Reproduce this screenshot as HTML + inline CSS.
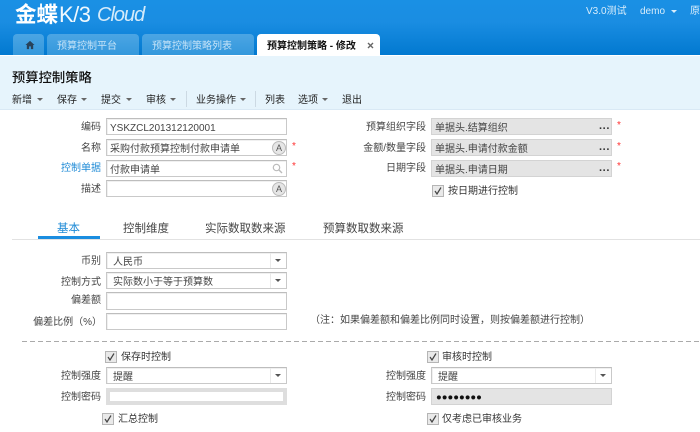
<!DOCTYPE html>
<html lang="zh">
<head>
<meta charset="utf-8">
<style>
html,body{margin:0;padding:0;background:#fff}
body{width:700px;height:432px;position:relative;overflow:hidden;font-family:"Liberation Sans","Noto Sans CJK SC",sans-serif;font-size:10px;color:#333}
.a{position:absolute;white-space:nowrap}
#hd{left:0;top:0;width:700px;height:55px;background:linear-gradient(#1a90e4 0,#1a8de2 40%,#0279d0 100%)}
#pn{left:0;top:56px;width:700px;height:53px;background:#e6f4fc;border-bottom:1px solid #d9e9f5}
.tab{top:34px;height:21px;border-radius:4px 4px 0 0;color:#c4e2f7;font-size:10px;line-height:26px;box-sizing:border-box;padding-left:10px;background:linear-gradient(#4ba5e4,#3498dc)}
.tb{top:94px;font-size:10px;line-height:14px;color:#222}
.ar{top:98px;width:0;height:0;border:3px solid transparent;border-top:3px solid #666;border-bottom:0}
.sep{top:91px;width:1px;height:16px;background:#ccd9e3}
.l{font-size:10px;line-height:14px;color:#444;text-align:right;margin-top:2px}
.i{box-sizing:border-box;background:#fff;border:1px solid #c9c9c9;border-top-color:#bdbdbd;box-shadow:inset 1px 1px 0 #f0f0f0;font-size:10px;line-height:16px;padding-left:3px;padding-top:2px;color:#444;overflow:hidden}
.g{background:#e4e4e4;border-color:#d3d3d3;box-shadow:none}
.st{color:#f33;font-size:10px;line-height:10px}
.dots{top:4px;right:1px;font-size:11px;line-height:12px;font-weight:bold;color:#333}
.lang{width:14px;height:14px;box-sizing:border-box;border-radius:50%;border:1px solid #bbb;background:#e6e6e6;font-size:9px;line-height:12px;text-align:center;color:#555}
.cb{box-sizing:border-box;width:12px;height:12px;border:1px solid #b5b5b5;background:#e9e9e9}
.cb svg{position:absolute;left:0;top:0}
.dd{width:0;height:0;border:3px solid transparent;border-top:3px solid #555;border-bottom:0}
.vs{width:1px;background:#eaeaea}
.tt{font-size:11.5px;line-height:14px;color:#444;top:222px}
.c{line-height:14px;color:#333;font-size:10px;margin-top:2px}
</style>
</head>
<body>
<div class="a" id="hd"></div>
<div class="a" style="left:15px;top:2px;font-size:21.5px;line-height:26px;color:#fff;font-weight:bold">金蝶</div>
<div class="a" style="left:59px;top:1px;font-size:22px;line-height:28px;color:#f0f8fd;letter-spacing:-.5px">K/3</div>
<div class="a" style="left:97px;top:1px;font-size:20px;line-height:28px;font-style:italic;color:#d5ebfa;letter-spacing:-1px">Cloud</div>
<div class="a" style="left:586px;top:5px;font-size:10px;line-height:14px;color:#d8edfb">V3.0测试</div>
<div class="a" style="left:640px;top:5px;font-size:10px;line-height:14px;color:#d8edfb">demo</div>
<div class="a" style="left:671px;top:10px;width:0;height:0;border:3px solid transparent;border-top:3px solid #d8edfb;border-bottom:0"></div>
<div class="a" style="left:690px;top:5px;font-size:10px;line-height:14px;color:#d8edfb">原</div>

<div class="a tab" style="left:13px;width:31px"></div>
<svg class="a" style="left:25px;top:40px" width="10" height="10" viewBox="0 0 11 10"><path d="M5.5 0.5 0.5 5H2v4.5h2.5V6.5h2v3H9V5h1.5z" fill="#28425a"/></svg>
<div class="a tab" style="left:47px;width:92px">预算控制平台</div>
<div class="a tab" style="left:142px;width:112px">预算控制策略列表</div>
<div class="a" style="left:257px;top:34px;width:123px;height:22px;background:#fff;border-radius:4px 4px 0 0"></div>
<div class="a" style="left:267px;top:40px;font-size:10px;line-height:14px;color:#111;font-weight:bold">预算控制策略 - 修改</div>
<svg class="a" style="left:367px;top:42px" width="7" height="7" viewBox="0 0 7 7"><path d="M1 1l5 5M6 1L1 6" stroke="#666" stroke-width="1.4"/></svg>

<div class="a" style="left:0;top:55px;width:700px;height:1px;background:#fff"></div>
<div class="a" id="pn"></div>
<div class="a" style="left:12px;top:69px;font-size:13.3px;line-height:18px;color:#111;font-weight:500">预算控制策略</div>

<div class="a tb" style="left:12px">新增</div><div class="a ar" style="left:37px"></div>
<div class="a tb" style="left:57px">保存</div><div class="a ar" style="left:81px"></div>
<div class="a tb" style="left:101px">提交</div><div class="a ar" style="left:126px"></div>
<div class="a tb" style="left:146px">审核</div><div class="a ar" style="left:170px"></div>
<div class="a sep" style="left:186px"></div>
<div class="a tb" style="left:196px">业务操作</div><div class="a ar" style="left:240px"></div>
<div class="a sep" style="left:255px"></div>
<div class="a tb" style="left:265px">列表</div>
<div class="a tb" style="left:298px">选项</div><div class="a ar" style="left:322px"></div>
<div class="a tb" style="left:342px">退出</div>

<!-- top form left -->
<div class="a l" style="left:40px;width:61px;top:119px">编码</div>
<div class="a i" style="left:106px;top:118px;width:181px;height:17px">YSKZCL201312120001</div>
<div class="a l" style="left:40px;width:61px;top:140px">名称</div>
<div class="a i" style="left:106px;top:139px;width:181px;height:17px">采购付款预算控制付款申请单</div>
<div class="a lang" style="left:272px;top:141px">A</div>
<div class="a st" style="left:292px;top:142px">*</div>
<div class="a l" style="left:40px;width:61px;top:160px;color:#1e8ad6">控制单据</div>
<div class="a i" style="left:106px;top:160px;width:181px;height:17px">付款申请单</div>
<svg class="a" style="left:272px;top:163px" width="11" height="11" viewBox="0 0 11 11"><circle cx="4.5" cy="4.5" r="3.2" fill="none" stroke="#bbb" stroke-width="1.2"/><path d="M7 7l3 3" stroke="#bbb" stroke-width="1.4"/></svg>
<div class="a st" style="left:292px;top:162px">*</div>
<div class="a l" style="left:40px;width:61px;top:181px">描述</div>
<div class="a i" style="left:106px;top:180px;width:181px;height:17px"></div>
<div class="a lang" style="left:272px;top:182px">A</div>

<!-- top form right -->
<div class="a l" style="left:350px;width:76px;top:119px">预算组织字段</div>
<div class="a i g" style="left:431px;top:118px;width:181px;height:17px">单据头.结算组织<span class="a dots">···</span></div>
<div class="a st" style="left:617px;top:121px">*</div>
<div class="a l" style="left:350px;width:76px;top:140px">金额/数量字段</div>
<div class="a i g" style="left:431px;top:139px;width:181px;height:17px">单据头.申请付款金额<span class="a dots">···</span></div>
<div class="a st" style="left:617px;top:142px">*</div>
<div class="a l" style="left:350px;width:76px;top:160px">日期字段</div>
<div class="a i g" style="left:431px;top:160px;width:181px;height:17px">单据头.申请日期<span class="a dots">···</span></div>
<div class="a st" style="left:617px;top:162px">*</div>
<div class="a cb" style="left:432px;top:185px"><svg width="10" height="10" viewBox="0 0 10 10"><path d="M2 5l2 3 4-6.5" fill="none" stroke="#444" stroke-width="1.2"/></svg></div>
<div class="a c" style="left:448px;top:183px">按日期进行控制</div>

<!-- section tabs -->
<div class="a tt" style="left:57px;color:#1e8ad6">基本</div>
<div class="a" style="left:38px;top:236px;width:62px;height:3px;background:#1a8de0"></div>
<div class="a tt" style="left:123px">控制维度</div>
<div class="a tt" style="left:205px">实际数取数来源</div>
<div class="a tt" style="left:323px">预算数取数来源</div>
<div class="a" style="left:12px;top:239px;width:688px;height:1px;background:#e2e2e2"></div>

<!-- lower form -->
<div class="a l" style="left:30px;width:71px;top:253px">币别</div>
<div class="a i" style="left:106px;top:252px;width:181px;height:17px;padding-left:6px">人民币</div>
<div class="a vs" style="left:270px;top:253px;height:15px"></div>
<div class="a dd" style="left:275px;top:259px"></div>
<div class="a l" style="left:30px;width:71px;top:274px">控制方式</div>
<div class="a i" style="left:106px;top:272px;width:181px;height:17px;padding-left:6px">实际数小于等于预算数</div>
<div class="a vs" style="left:270px;top:273px;height:15px"></div>
<div class="a dd" style="left:275px;top:279px"></div>
<div class="a l" style="left:30px;width:71px;top:292px">偏差额</div>
<div class="a i" style="left:106px;top:292px;width:181px;height:18px"></div>
<div class="a l" style="left:20px;width:82px;top:314px">偏差比例（%）</div>
<div class="a i" style="left:106px;top:313px;width:181px;height:17px"></div>
<div class="a c" style="left:310px;top:312px;color:#444">（注：如果偏差额和偏差比例同时设置，则按偏差额进行控制）</div>

<div class="a" style="left:22px;top:341px;width:678px;height:1px;background:repeating-linear-gradient(90deg,#aaa 0 5px,transparent 5px 8px)"></div>

<div class="a cb" style="left:105px;top:351px"><svg width="10" height="10" viewBox="0 0 10 10"><path d="M2 5l2 3 4-6.5" fill="none" stroke="#444" stroke-width="1.2"/></svg></div>
<div class="a c" style="left:121px;top:349px">保存时控制</div>
<div class="a l" style="left:30px;width:71px;top:368px">控制强度</div>
<div class="a i" style="left:106px;top:367px;width:181px;height:17px;padding-left:6px">提醒</div>
<div class="a vs" style="left:270px;top:368px;height:15px"></div>
<div class="a dd" style="left:275px;top:374px"></div>
<div class="a l" style="left:30px;width:71px;top:389px">控制密码</div>
<div class="a i" style="left:106px;top:388px;width:181px;height:17px;background:#fff;border:4px solid #dedede;box-shadow:none;padding:0"></div>
<div class="a cb" style="left:102px;top:413px"><svg width="10" height="10" viewBox="0 0 10 10"><path d="M2 5l2 3 4-6.5" fill="none" stroke="#444" stroke-width="1.2"/></svg></div>
<div class="a c" style="left:118px;top:411px">汇总控制</div>

<div class="a cb" style="left:427px;top:351px"><svg width="10" height="10" viewBox="0 0 10 10"><path d="M2 5l2 3 4-6.5" fill="none" stroke="#444" stroke-width="1.2"/></svg></div>
<div class="a c" style="left:442px;top:349px">审核时控制</div>
<div class="a l" style="left:355px;width:71px;top:368px">控制强度</div>
<div class="a i" style="left:431px;top:367px;width:181px;height:17px;padding-left:6px">提醒</div>
<div class="a vs" style="left:595px;top:368px;height:15px"></div>
<div class="a dd" style="left:600px;top:374px"></div>
<div class="a l" style="left:355px;width:71px;top:389px">控制密码</div>
<div class="a i g" style="left:431px;top:388px;width:181px;height:17px;color:#111;font-size:9.5px;padding-left:4px;padding-top:1px">●●●●●●●●</div>
<div class="a cb" style="left:427px;top:413px"><svg width="10" height="10" viewBox="0 0 10 10"><path d="M2 5l2 3 4-6.5" fill="none" stroke="#444" stroke-width="1.2"/></svg></div>
<div class="a c" style="left:442px;top:411px">仅考虑已审核业务</div>
</body>
</html>
